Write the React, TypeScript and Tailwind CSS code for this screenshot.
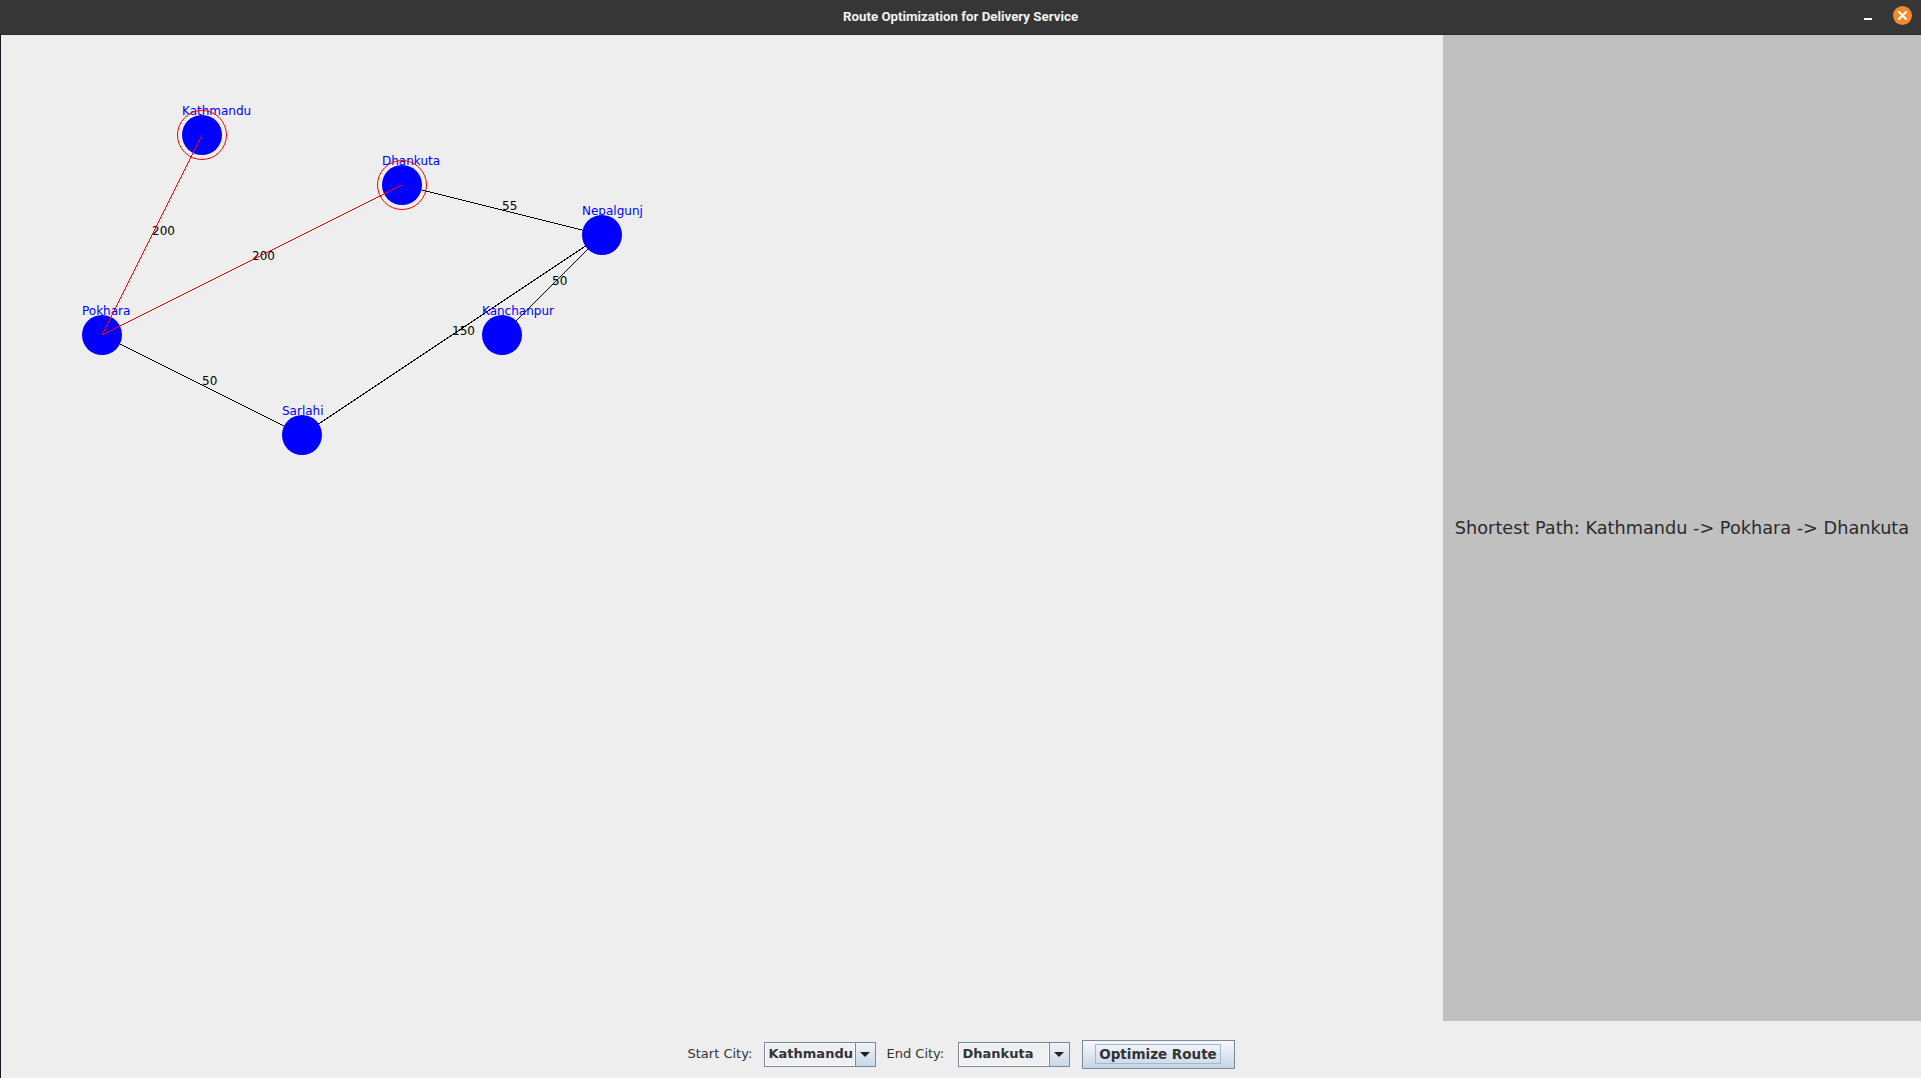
import React from 'react';

type City = { name: string; x: number; y: number };

const cities: City[] = [
  { name: 'Kathmandu', x: 200, y: 100 },
  { name: 'Pokhara', x: 100, y: 300 },
  { name: 'Dhankuta', x: 400, y: 150 },
  { name: 'Nepalgunj', x: 600, y: 200 },
  { name: 'Kanchanpur', x: 500, y: 300 },
  { name: 'Sarlahi', x: 300, y: 400 },
];

const roads: [string, string, number][] = [
  ['Kathmandu', 'Pokhara', 200],
  ['Pokhara', 'Dhankuta', 200],
  ['Dhankuta', 'Nepalgunj', 55],
  ['Nepalgunj', 'Kanchanpur', 50],
  ['Nepalgunj', 'Sarlahi', 150],
  ['Pokhara', 'Sarlahi', 50],
];

const path = ['Kathmandu', 'Pokhara', 'Dhankuta'];

const find = (n: string) => cities.find((c) => c.name === n)!;

function Graph() {
  return (
    <svg width="700" height="460" className="block" style={{ fontFamily: '"DejaVu Sans", sans-serif' }}>
      <g transform="translate(1,0)">
        {/* plain roads */}
        {roads.map(([a, b, w]) => {
          const p = find(a);
          const q = find(b);
          return (
            <g key={a + b}>
              <line x1={p.x} y1={p.y} x2={q.x} y2={q.y} stroke="#000" strokeWidth={1} shapeRendering="crispEdges" />
              <text x={(p.x + q.x) / 2} y={(p.y + q.y) / 2} fontSize={12} fill="#000">
                {w}
              </text>
            </g>
          );
        })}
        {/* cities */}
        {cities.map((c) => (
          <g key={c.name}>
            <circle cx={c.x} cy={c.y} r={20} fill="#0000ff" />
            <text x={c.x - 20} y={c.y - 20} fontSize={12} fill="#0000ff">
              {c.name}
            </text>
          </g>
        ))}
        {/* shortest path */}
        {path.slice(1).map((n, i) => {
          const p = find(path[i]);
          const q = find(n);
          return (
            <line key={n} x1={p.x} y1={p.y} x2={q.x} y2={q.y} stroke="#ff0000" strokeWidth={1} shapeRendering="crispEdges" />
          );
        })}
        {[path[0], path[path.length - 1]].map((n) => {
          const c = find(n);
          return <circle key={n} cx={c.x} cy={c.y} r={24.5} fill="none" stroke="#ff0000" strokeWidth={1} />;
        })}
      </g>
    </svg>
  );
}

function Combo({ value }: { value: string }) {
  return (
    <div className="flex h-[25px] w-[112px] border border-[#7a8a99] bg-[#eef0f3]">
      <div className="flex flex-1 items-center border border-white pl-[3px] text-[13px] font-bold text-[#333333]">
        {value}
      </div>
      <div className="flex w-[20px] items-center justify-center border-l border-[#7a8a99] bg-gradient-to-b from-[#f0f4f9] to-[#c9d8e8]">
        <div className="h-0 w-0 border-x-[5px] border-t-[5px] border-x-transparent border-t-[#222]" />
      </div>
    </div>
  );
}

export default function App() {
  return (
    <div className="flex h-[1078px] w-[1921px] flex-col overflow-hidden bg-[#eeeeee]" style={{ fontFamily: '"DejaVu Sans", sans-serif' }}>
      {/* Title bar */}
      <div className="relative flex h-[35px] shrink-0 items-center justify-center border-b border-[#2a2a2a] bg-[#363636]">
        <span
          className="text-[13.3px] font-bold text-[#f2f2f2]"
          style={{ fontFamily: '"Liberation Sans Narrow", "Roboto", sans-serif' }}
        >
          Route Optimization for Delivery Service
        </span>
        <div className="absolute right-[9px] top-[6px] flex items-center gap-[21px]">
          <div className="mt-[7px] h-[2px] w-[8px] bg-white" />
          <div className="flex h-[19px] w-[19px] items-center justify-center rounded-full bg-[#f28c2a]">
            <svg width="9" height="9" viewBox="0 0 9 9">
              <path d="M1 1L8 8M8 1L1 8" stroke="#fff" strokeWidth="2" strokeLinecap="round" />
            </svg>
          </div>
        </div>
      </div>

      {/* Body */}
      <div className="flex flex-1 border-l border-[#15171c]">
        <div className="flex-1">
          <Graph />
        </div>
        <div className="flex w-[478px] items-center justify-center bg-[#c0c0c0]">
          <span className="whitespace-nowrap text-[17.7px] text-[#2b2b2b]">
            Shortest Path: Kathmandu -&gt; Pokhara -&gt; Dhankuta
          </span>
        </div>
      </div>

      {/* Controls */}
      <div className="flex h-[57px] shrink-0 items-center justify-center border-l border-[#15171c] pt-[9px] text-[13px] text-[#333333]">
        <span className="w-[76px]">Start City:</span>
        <Combo value="Kathmandu" />
        <span className="ml-[11px] w-[71px]">End City:</span>
        <Combo value="Dhankuta" />
        <button className="ml-[12px] flex h-[29px] w-[153px] items-center justify-center border border-[#7a8a99] bg-gradient-to-b from-[#f7f9fc] to-[#c6d6e7]">
          <span className="border border-[#a3b8cc] px-[3px] text-[13.5px] font-bold leading-[18px] text-[#333333]">
            Optimize Route
          </span>
        </button>
      </div>
    </div>
  );
}
